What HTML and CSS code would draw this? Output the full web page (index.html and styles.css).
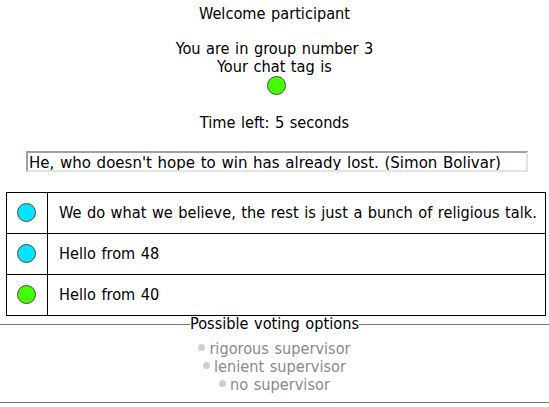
FILE: index.html
```html
<!DOCTYPE html>
<html>
<head>
<meta charset="utf-8">
<link rel="stylesheet" href="styles.css">
</head>
<body>
<div class="header">
  <div class="line">Welcome participant</div>
  <div class="line group">You are in group number 3</div>
  <div class="line">Your chat tag is</div>
  <div class="tagrow"><span class="dot green"></span></div>
  <div class="line time">Time left: 5 seconds</div>
</div>
<div class="inputrow">
  <input class="chatinput" type="text" value="He, who doesn't hope to win has already lost. (Simon Bolivar)">
</div>
<table class="chat">
  <tr><td class="tagcell"><span class="dot cyan"></span></td><td class="msg">We do what we believe, the rest is just a bunch of religious talk.</td></tr>
  <tr><td class="tagcell"><span class="dot cyan"></span></td><td class="msg">Hello from 48</td></tr>
  <tr><td class="tagcell"><span class="dot green"></span></td><td class="msg">Hello from 40</td></tr>
</table>
<fieldset class="voting">
  <legend class="legend">Possible voting options</legend>
  <div class="option first"><span class="bullet"></span>rigorous supervisor</div>
  <div class="option"><span class="bullet"></span>lenient supervisor</div>
  <div class="option"><span class="bullet"></span>no supervisor</div>
</fieldset>
</body>
</html>
```
FILE: styles.css
```css
html, body {
  margin: 0;
  padding: 0;
  background: #fff;
}
body {
  font-family: "DejaVu Sans Condensed", "DejaVu Sans", sans-serif;
  font-stretch: condensed;
  font-size: 16.2px;
  word-spacing: 0.9px;
  line-height: 18px;
  color: #000;
  overflow: hidden;
}
.header {
  text-align: center;
  padding-top: 5px;
}
.line {
  height: 18px;
}
.group {
  margin-top: 17px;
}
.tagrow {
  height: 19px;
  display: flex;
  justify-content: center;
}
.dot {
  display: inline-block;
  width: 17px;
  height: 17px;
  border-radius: 50%;
  border: 1px solid #4a4a4a;
  box-sizing: content-box;
}
.green { background: #44ff00; }
.cyan { background: #00e5ff; }
.tagrow .dot {
  margin-left: 3px;
}
.time {
  margin-top: 19px;
}
.inputrow {
  margin-top: 19px;
  padding-left: 26px;
}
.chatinput {
  display: block;
  box-sizing: border-box;
  width: 502px;
  height: 21px;
  margin: 0;
  padding: 0 1px;
  font-family: inherit;
  font-stretch: condensed;
  font-size: 16.7px;
  word-spacing: 0.9px;
  color: #000;
  border-style: solid;
  border-width: 2px;
  border-color: #a0a0a0 #e3e3e3 #e3e3e3 #a0a0a0;
  background: #fff;
  outline: none;
}
.chat {
  margin-top: 20px;
  margin-left: 6px;
  width: 540px;
  border-collapse: collapse;
}
.chat td {
  border: 1px solid #000;
  height: 40px;
  padding: 0;
  vertical-align: middle;
}
.tagcell {
  width: 40px;
  text-align: center;
}
.tagcell .dot {
  vertical-align: middle;
  position: relative;
  top: -1px;
  left: -1px;
}
.msg {
  padding-left: 11px !important;
}
.voting {
  margin: -1px -3px 0;
  padding: 1px 0 8px;
  border: none;
  border-top: 1px solid #7a7a7a;
  border-bottom: 1px solid #7a7a7a;
  text-align: center;
}
.legend {
  margin: 0 auto;
  padding: 0;
  line-height: 18px;
}
.option {
  color: #8a8a8a;
  line-height: 18px;
}
.first {
  margin-top: 6px;
}
.bullet {
  display: inline-block;
  width: 7px;
  height: 7px;
  border-radius: 50%;
  background: #cfcfcf;
  margin-right: 4px;
  vertical-align: 3px;
}
```
